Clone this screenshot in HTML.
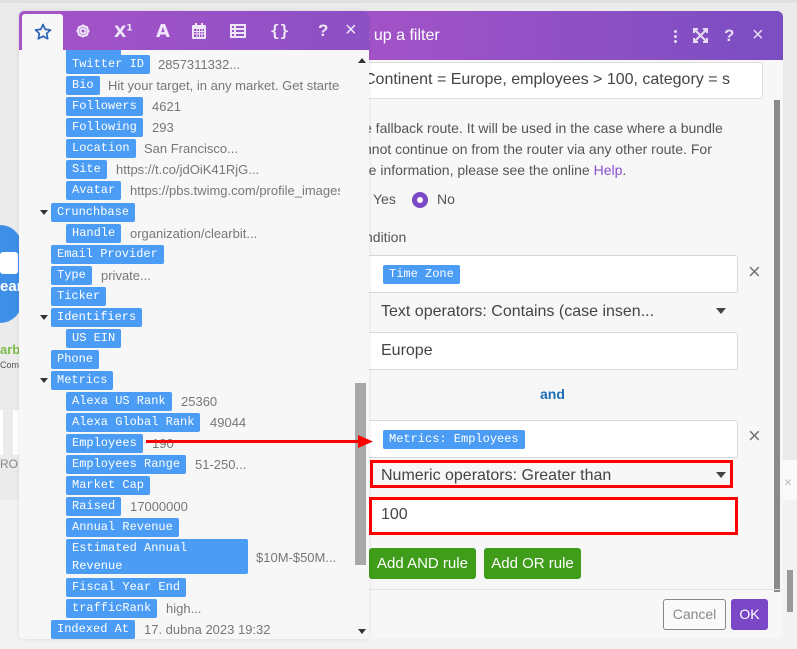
<!DOCTYPE html>
<html><head><meta charset="utf-8"><style>
*{box-sizing:border-box;margin:0;padding:0}
body{width:797px;height:649px;overflow:hidden;background:#ebebeb;font-family:"Liberation Sans",sans-serif;position:relative}
.abs{position:absolute}
.tag{position:absolute;background:#4b9cf5;color:#fff;font-family:"Liberation Mono",monospace;font-size:12px;line-height:18px;height:19px;padding:0 6px;border-radius:2px;white-space:nowrap}
.val{position:absolute;color:#777;font-size:13px;line-height:19px;white-space:nowrap}
.tri{position:absolute;width:0;height:0;border-left:4px solid transparent;border-right:4px solid transparent;border-top:5px solid #333}
.box{position:absolute;background:#fff;border:1px solid #d8d8d8;border-radius:3px}
.t16{font-size:16px;color:#444}
</style></head><body>
<div class="abs" style="left:0;top:0;width:797px;height:3px;background:#e0e0e0"></div>
<div class="abs" style="left:0;top:225px;width:22px;height:98px;background:#3e8fe8;border-radius:0 30px 30px 0"></div>
<div class="abs" style="left:0;top:252px;width:18px;height:22px;background:#fff;border-radius:3px"></div>
<div class="abs" style="left:0;top:278px;color:#fff;font-weight:bold;font-size:15px">earl</div>
<div class="abs" style="left:0;top:342px;color:#7dbb4a;font-weight:bold;font-size:13px">arb</div>
<div class="abs" style="left:0;top:360px;color:#555;font-size:9px">Comp</div>
<div class="abs" style="left:0;top:410px;width:3px;height:45px;background:#fff"></div>
<div class="abs" style="left:13px;top:410px;width:8px;height:45px;background:#fff"></div>
<div class="abs" style="left:0;top:457px;color:#888;font-size:12px">ROL</div>
<div class="abs" style="left:0;top:500px;width:797px;height:149px;background:#f2f2f2"></div>
<div class="abs" style="left:782px;top:460px;width:15px;height:40px;background:#fafafa"></div>
<div class="abs" style="left:784px;top:474px;color:#bbb;font-size:14px">×</div>

<div class="abs" style="left:340px;top:11px;width:443px;height:628px;background:#f7f7f7;border-radius:6px;overflow:hidden">
 <div class="abs" style="left:0;top:0;width:443px;height:49px;background:linear-gradient(90deg,#a653c8,#7a4ec2)"></div>
 <div class="abs" style="left:25px;top:16px;color:#fff;font-size:16px">t up a filter</div>
 <div class="abs" style="left:334px;top:19px;width:3px;height:3px;background:#e8dcf5;box-shadow:0 5px #e8dcf5,0 10px #e8dcf5;border-radius:50%"></div>
 <svg class="abs" style="left:353px;top:17px" width="15" height="15" viewBox="0 0 15 15" fill="none" stroke="#e8dcf5" stroke-width="2"><path d="M1 5V1h4M10 1h4v4M14 10v4h-4M5 14H1v-4M2 2l11 11M13 2L2 13"/></svg>
 <div class="abs" style="left:384px;top:15px;color:#e8dcf5;font-size:17px;font-weight:bold">?</div>
 <div class="abs" style="left:412px;top:13px;color:#e8dcf5;font-size:20px">×</div>
 <div class="box" style="left:10px;top:51px;width:413px;height:37px;border-color:#ddd"></div>
 <div class="abs t16" style="left:24px;top:60px">Continent = Europe, employees &gt; 100, category = s</div>
 <div class="abs" style="left:24px;top:107px;width:400px;color:#555;font-size:14px;line-height:21px">e fallback route. It will be used in the case where a bundle<br>nnot continue on from the router via any other route. For<br>re information, please see the online <span style="color:#8a4fd0">Help</span>.</div>
 <div class="abs" style="left:33px;top:180px;color:#555;font-size:14px">Yes</div>
 <div class="abs" style="left:72px;top:181px;width:16px;height:16px;border-radius:50%;border:5px solid #7a48c6;background:#fff"></div>
 <div class="abs" style="left:97px;top:180px;color:#555;font-size:14px">No</div>
 <div class="abs" style="left:25px;top:218px;color:#555;font-size:14px">ndition</div>
 <div class="box" style="left:10px;top:244px;width:388px;height:38px"></div>
 <div class="tag" style="left:43px;top:254px">Time Zone</div>
 <div class="abs" style="left:408px;top:248px;color:#777;font-size:22px">×</div>
 <div class="abs t16" style="left:41px;top:292px">Text operators: Contains (case insen...</div>
 <div class="tri" style="left:376px;top:297px;border-left-width:5px;border-right-width:5px;border-top-width:6px;border-top-color:#444"></div>
 <div class="box" style="left:10px;top:321px;width:388px;height:38px"></div>
 <div class="abs t16" style="left:41px;top:331px">Europe</div>
 <div class="abs" style="left:200px;top:375px;color:#1b6db5;font-size:14px;font-weight:bold">and</div>
 <div class="box" style="left:10px;top:409px;width:388px;height:38px"></div>
 <div class="tag" style="left:43px;top:419px">Metrics: Employees</div>
 <div class="abs" style="left:408px;top:412px;color:#777;font-size:22px">×</div>
 <div class="abs" style="left:30px;top:449px;width:363px;height:28px;border:3px solid #f00"></div>
 <div class="abs t16" style="left:41px;top:456px">Numeric operators: Greater than</div>
 <div class="tri" style="left:376px;top:461px;border-left-width:5px;border-right-width:5px;border-top-width:6px;border-top-color:#444"></div>
 <div class="abs" style="left:29px;top:486px;width:369px;height:38px;background:#fff;border:3px solid #f00"></div>
 <div class="abs t16" style="left:41px;top:495px">100</div>
 <div class="abs" style="left:29px;top:537px;width:107px;height:31px;background:#3f9d19;border-radius:3px;color:#fff;font-size:15px;line-height:31px;text-align:center">Add AND rule</div>
 <div class="abs" style="left:144px;top:537px;width:97px;height:31px;background:#3f9d19;border-radius:3px;color:#fff;font-size:15px;line-height:31px;text-align:center">Add OR rule</div>
 <div class="abs" style="left:434px;top:89px;width:6px;height:492px;background:#8a8a8a"></div>
 <div class="abs" style="left:0;top:578px;width:443px;height:1px;background:#e4e4e4"></div>
 <div class="abs" style="left:323px;top:588px;width:63px;height:31px;border:1px solid #888;border-radius:3px;color:#888;font-size:14px;line-height:29px;text-align:center;background:#fafafa">Cancel</div>
 <div class="abs" style="left:391px;top:588px;width:37px;height:31px;background:#7a48c6;border-radius:3px;color:#fff;font-size:14px;line-height:31px;text-align:center">OK</div>
</div>
<div class="abs" style="left:787px;top:570px;width:6px;height:42px;background:#999"></div>

<div class="abs" style="left:19px;top:11px;width:350px;height:628px;background:#f7f7f7;border-radius:5px;overflow:hidden;box-shadow:0 0 4px rgba(0,0,0,.1)">
 <div class="abs" style="left:0;top:0;width:350px;height:39px;background:linear-gradient(90deg,#a653c8,#8b50c4)"></div>
 <div class="abs" style="left:3px;top:3px;width:41px;height:37px;background:#f7f7f7;border-radius:3px 3px 0 0"></div>
 <svg class="abs" style="left:15px;top:12px" width="18" height="18" viewBox="0 0 24 24" fill="none" stroke="#2a63b8" stroke-width="2.2" stroke-linejoin="round"><path d="M12 2l3 6.5 7 .8-5.2 4.8 1.5 7L12 17.5 5.7 21.1l1.5-7L2 9.3l7-.8z"/></svg>
 <svg class="abs" style="left:56px;top:12px" width="16" height="16" viewBox="0 0 16 16" fill="none" stroke="#f0e6fa" stroke-width="2"><circle cx="8" cy="8" r="2.5"/><path d="M8 1.5v2M8 12.5v2M1.5 8h2M12.5 8h2M3.4 3.4l1.4 1.4M11.2 11.2l1.4 1.4M3.4 12.6l1.4-1.4M11.2 4.8l1.4-1.4"/><circle cx="8" cy="8" r="5"/></svg>
 <div class="abs" style="left:95px;top:11px;color:#f0e6fa;font-size:16px;font-weight:bold;font-family:'DejaVu Sans',sans-serif">X<sup style="font-size:9px">1</sup></div>
 <div class="abs" style="left:137px;top:10px;color:#f0e6fa;font-size:18px;font-weight:bold;font-family:'DejaVu Sans',sans-serif">A</div>
 <svg class="abs" style="left:173px;top:12px" width="14" height="16" viewBox="0 0 14 16" fill="#f0e6fa"><rect x="0" y="2" width="14" height="14" rx="1"/><rect x="3" y="0" width="2" height="4"/><rect x="9" y="0" width="2" height="4"/><path d="M2 6h10v8H2z" fill="#9a52c6"/><path d="M2 8.5h10M2 11h10M5 6v8M7.5 6v8M10 6v8" stroke="#f0e6fa" stroke-width="1"/></svg>
 <svg class="abs" style="left:211px;top:13px" width="16" height="14" viewBox="0 0 16 14" fill="none" stroke="#f0e6fa" stroke-width="2"><rect x="1" y="1" width="14" height="12"/><path d="M1 5h14M1 9h14M5 1v12"/></svg>
 <div class="abs" style="left:251px;top:10px;color:#f0e6fa;font-size:16px;font-weight:bold;font-family:'DejaVu Sans Mono',monospace">{}</div>
 <div class="abs" style="left:299px;top:10px;color:#f0e6fa;font-size:17px;font-weight:bold">?</div>
 <div class="abs" style="left:326px;top:8px;color:#f0e6fa;font-size:20px">×</div>
 <div class="tri" style="left:339px;top:47px;border-top:0;border-bottom:5px solid #333"></div>
 <div class="abs" style="left:336px;top:372px;width:11px;height:182px;background:#a8a8a8"></div>
 <div class="tri" style="left:339px;top:618px"></div>
 <div class="tag" style="left:47px;top:39px;height:8px;width:55px;border-radius:0 0 2px 2px"></div>
</div>
<div class="tag" style="left:66px;top:55px">Twitter ID</div><div class="val" style="left:158px;top:55px">2857311332...</div>
<div class="tag" style="left:66px;top:76px">Bio</div><div class="val" style="left:108px;top:76px;width:232px;overflow:hidden">Hit your target, in any market. Get started</div>
<div class="tag" style="left:66px;top:97px">Followers</div><div class="val" style="left:152px;top:97px">4621</div>
<div class="tag" style="left:66px;top:118px">Following</div><div class="val" style="left:152px;top:118px">293</div>
<div class="tag" style="left:66px;top:139px">Location</div><div class="val" style="left:144px;top:139px">San Francisco...</div>
<div class="tag" style="left:66px;top:160px">Site</div><div class="val" style="left:116px;top:160px">https://t.co/jdOiK41RjG...</div>
<div class="tag" style="left:66px;top:181px">Avatar</div><div class="val" style="left:130px;top:181px;width:210px;overflow:hidden">https://pbs.twimg.com/profile_images</div>
<div class="tri" style="left:40px;top:210px"></div><div class="tag" style="left:51px;top:203px">Crunchbase</div>
<div class="tag" style="left:66px;top:224px">Handle</div><div class="val" style="left:130px;top:224px">organization/clearbit...</div>
<div class="tag" style="left:51px;top:245px">Email Provider</div>
<div class="tag" style="left:51px;top:266px">Type</div><div class="val" style="left:101px;top:266px">private...</div>
<div class="tag" style="left:51px;top:287px">Ticker</div>
<div class="tri" style="left:40px;top:315px"></div><div class="tag" style="left:51px;top:308px">Identifiers</div>
<div class="tag" style="left:66px;top:329px">US EIN</div>
<div class="tag" style="left:51px;top:350px">Phone</div>
<div class="tri" style="left:40px;top:378px"></div><div class="tag" style="left:51px;top:371px">Metrics</div>
<div class="tag" style="left:66px;top:392px">Alexa US Rank</div><div class="val" style="left:181px;top:392px">25360</div>
<div class="tag" style="left:66px;top:413px">Alexa Global Rank</div><div class="val" style="left:210px;top:413px">49044</div>
<div class="tag" style="left:66px;top:434px">Employees</div><div class="val" style="left:152px;top:434px">190</div>
<div class="tag" style="left:66px;top:455px">Employees Range</div><div class="val" style="left:195px;top:455px">51-250...</div>
<div class="tag" style="left:66px;top:476px">Market Cap</div>
<div class="tag" style="left:66px;top:497px">Raised</div><div class="val" style="left:130px;top:497px">17000000</div>
<div class="tag" style="left:66px;top:518px">Annual Revenue</div>
<div class="tag" style="left:66px;top:539px;width:182px;height:35px;white-space:normal">Estimated Annual Revenue</div><div class="val" style="left:256px;top:548px">$10M-$50M...</div>
<div class="tag" style="left:66px;top:578px">Fiscal Year End</div>
<div class="tag" style="left:66px;top:599px">trafficRank</div><div class="val" style="left:166px;top:599px">high...</div>
<div class="tag" style="left:51px;top:620px">Indexed At</div><div class="val" style="left:144px;top:620px">17. dubna 2023 19:32</div>

<svg class="abs" style="left:140px;top:432px" width="240" height="20"><path d="M6 9.5H222" stroke="#f00" stroke-width="3"/><path d="M218 3L233 9.5 218 16z" fill="#f00"/></svg>
</body></html>
